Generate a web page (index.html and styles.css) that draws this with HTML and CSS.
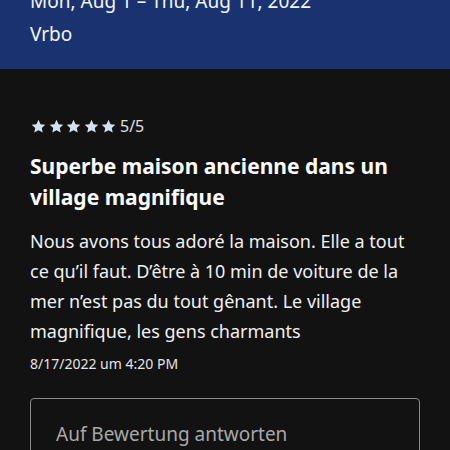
FILE: index.html
```html
<!DOCTYPE html>
<html lang="fr">
<head>
  <meta charset="UTF-8">
  <title>Bewertung</title>
  <link rel="stylesheet" href="styles.css">
</head>
<body>
  <header class="stay">
    <div class="stay-dates">Mon, Aug 1 – Thu, Aug 11, 2022</div>
    <div class="stay-source">Vrbo</div>
  </header>

  <section class="review">
    <div class="rating">
      <span class="stars">
        <svg viewBox="0 0 24 24"><path d="M12 2.5l2.9 6.2 6.7.7-5 4.6 1.4 6.6L12 17.3l-6 3.3 1.4-6.6-5-4.6 6.7-.7z"/></svg>
        <svg viewBox="0 0 24 24"><path d="M12 2.5l2.9 6.2 6.7.7-5 4.6 1.4 6.6L12 17.3l-6 3.3 1.4-6.6-5-4.6 6.7-.7z"/></svg>
        <svg viewBox="0 0 24 24"><path d="M12 2.5l2.9 6.2 6.7.7-5 4.6 1.4 6.6L12 17.3l-6 3.3 1.4-6.6-5-4.6 6.7-.7z"/></svg>
        <svg viewBox="0 0 24 24"><path d="M12 2.5l2.9 6.2 6.7.7-5 4.6 1.4 6.6L12 17.3l-6 3.3 1.4-6.6-5-4.6 6.7-.7z"/></svg>
        <svg viewBox="0 0 24 24"><path d="M12 2.5l2.9 6.2 6.7.7-5 4.6 1.4 6.6L12 17.3l-6 3.3 1.4-6.6-5-4.6 6.7-.7z"/></svg>
      </span>
      <span class="score">5/5</span>
    </div>

    <h2 class="review-title">Superbe maison ancienne dans un village magnifique</h2>

    <p class="review-text">Nous avons tous adoré la maison. Elle a tout ce qu’il faut. D’être à 10 min de voiture de la mer n’est pas du tout gênant. Le village magnifique, les gens charmants</p>

    <div class="review-date">8/17/2022 um 4:20 PM</div>

    <div class="reply-box">Auf Bewertung antworten</div>
  </section>
</body>
</html>
```

FILE: styles.css
```css
body {
  margin: 0;
  background: #121212;
  color: #f2f2f2;
  font-family: 'Noto Sans', 'Open Sans', sans-serif;
  overflow: hidden;
}

.stay {
  display: flow-root;
  background: #1a3370;
  padding: 0 30px;
  height: 69px;
  box-sizing: border-box;
  color: #f4f6fb;
}

.stay-dates {
  font-size: 19px;
  line-height: 24px;
  margin-top: -11px;
}

.stay-source {
  font-size: 19px;
  line-height: 24px;
  margin-top: 9px;
}

.review {
  padding: 48px 30px 0;
}

.rating {
  display: flex;
  align-items: center;
  gap: 3px;
  height: 18px;
}

.stars {
  display: flex;
  gap: 0.5px;
}

.stars svg {
  width: 17px;
  height: 17px;
  fill: #d4e0ee;
}

.score {
  font-size: 16px;
  color: #e0e0e0;
}

.review-title {
  margin: 16px 0 0;
  font-size: 21px;
  line-height: 31px;
  font-weight: 700;
  color: #fafafa;
}

.review-text {
  margin: 13px 0 0;
  font-size: 18px;
  line-height: 30px;
  color: #f0f0f0;
}

.review-date {
  margin-top: 8px;
  font-size: 14px;
  line-height: 20px;
  color: #e4e4e4;
}

.reply-box {
  margin-top: 24px;
  border: 1.5px solid #8a8a8a;
  border-radius: 4px;
  height: 80px;
  padding: 22px 25px;
  box-sizing: border-box;
  font-size: 19px;
  color: #a8a8a8;
}
```
